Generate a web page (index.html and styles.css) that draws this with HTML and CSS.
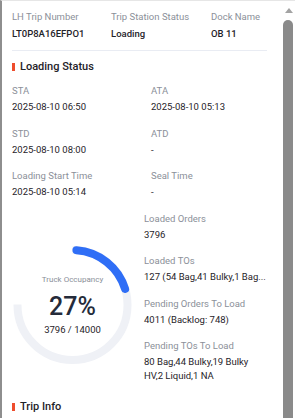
FILE: index.html
```html
<!DOCTYPE html>
<html>
<head>
<meta charset="utf-8">
<link rel="stylesheet" href="styles.css">
</head>
<body>
<div class="frame">
  <div class="content">
    <div class="header">
      <div class="field head">
        <div class="label">LH Trip Number</div>
        <div class="value strong">LT0P8A16EFPO1</div>
      </div>
      <div class="field head">
        <div class="label">Trip Station Status</div>
        <div class="value strong">Loading</div>
      </div>
      <div class="field head">
        <div class="label">Dock Name</div>
        <div class="value strong">OB 11</div>
      </div>
    </div>

    <div class="title first">Loading Status</div>
    <div class="grid">
      <div class="field"><div class="label">STA</div><div class="value">2025-08-10 06:50</div></div>
      <div class="field"><div class="label">ATA</div><div class="value">2025-08-10 05:13</div></div>
      <div class="field"><div class="label">STD</div><div class="value">2025-08-10 08:00</div></div>
      <div class="field"><div class="label">ATD</div><div class="value">-</div></div>
      <div class="field"><div class="label">Loading Start Time</div><div class="value">2025-08-10 05:14</div></div>
      <div class="field"><div class="label">Seal Time</div><div class="value">-</div></div>
    </div>

    <div class="occupancy">
      <div class="gauge">
        <svg width="132" height="132" viewBox="0 0 132 132">
          <circle cx="60.5" cy="66" r="55" fill="none" stroke="#eff1f6" stroke-width="8"
                  stroke-dasharray="259.2 345.6" transform="rotate(-90 60.5 66)"/>
          <circle cx="60.5" cy="66" r="55" fill="none" stroke="#2f6ef6" stroke-width="8"
                  stroke-linecap="round" stroke-dasharray="66 345.6" stroke-dashoffset="-4"
                  transform="rotate(-90 60.5 66)"/>
        </svg>
        <div class="gauge-text">
          <div class="g-label">Truck Occupancy</div>
          <div class="g-pct">27%</div>
          <div class="g-num">3796 / 14000</div>
        </div>
      </div>
      <div class="stats">
        <div class="field"><div class="label">Loaded Orders</div><div class="value">3796</div></div>
        <div class="field"><div class="label">Loaded TOs</div><div class="value nowrap">127 (54 Bag,41 Bulky,1 Bag...</div></div>
        <div class="field"><div class="label">Pending Orders To Load</div><div class="value">4011 (Backlog: 748)</div></div>
        <div class="field"><div class="label">Pending TOs To Load</div><div class="value">80 Bag,44 Bulky,19 Bulky HV,2 Liquid,1 NA</div></div>
      </div>
    </div>

    <div class="title second">Trip Info</div>
  </div>
  <div class="scrollbar">
    <div class="arrow"></div>
    <div class="thumb"></div>
  </div>
</div>
</body>
</html>
```

FILE: styles.css
```css
* { box-sizing: border-box; }
html, body {
  margin: 0;
  padding: 0;
  width: 295px;
  height: 418px;
  overflow: hidden;
  background: #ffffff;
  font-family: Roboto, "Liberation Sans", sans-serif;
}
.frame {
  display: flex;
  height: 418px;
  border-left: 2px solid #8e8e8e;
  border-top: 1px solid #e6e6e6;
}
.content {
  flex: 1;
  min-width: 0;
  padding: 9px 15px 0 10px;
}
.header {
  display: grid;
  grid-template-columns: 99px 100px 1fr;
  padding-bottom: 9px;
  border-bottom: 1px solid #e9ecf3;
}
.label {
  font-size: 9.5px;
  line-height: 14px;
  color: #8b9099;
  white-space: nowrap;
}
.value {
  font-size: 9.5px;
  line-height: 14px;
  color: #1f2329;
  margin-top: 2px;
}
.head .value { margin-top: 3px; }
.value.strong { font-weight: 500; }
.grid .field, .stats .field { margin-bottom: 12.5px; }
.nowrap { white-space: nowrap; }
.title {
  display: flex;
  align-items: center;
  gap: 5px;
  font-size: 11px;
  line-height: 16px;
  font-weight: 500;
  color: #1f2329;
}
.title::before {
  content: "";
  width: 3px;
  height: 8px;
  background: #ee4d2d;
}
.title.first { margin-top: 8px; }
.title.second { margin-top: 3px; }
.grid {
  display: grid;
  grid-template-columns: 139px 1fr;
  margin-top: 9px;
}
.occupancy {
  display: grid;
  grid-template-columns: 132px 1fr;
}
.gauge {
  position: relative;
  width: 132px;
  height: 132px;
  margin-top: 27.5px;
}
.gauge svg { display: block; }
.gauge-text {
  position: absolute;
  left: 0;
  top: 0;
  width: 121px;
  height: 132px;
  display: flex;
  flex-direction: column;
  align-items: center;
  justify-content: center;
  text-align: center;
}
.g-label {
  font-size: 8px;
  line-height: 10px;
  color: #8b9099;
  margin-bottom: 9px;
}
.g-pct {
  font-size: 25px;
  line-height: 26px;
  font-weight: 500;
  color: #252b3a;
}
.g-num {
  font-size: 9.5px;
  line-height: 12px;
  color: #1f2329;
  margin-top: 4px;
}
.stats { min-width: 0; }
.scrollbar {
  width: 13px;
  display: flex;
  flex-direction: column;
  align-items: flex-start;
  padding-left: 1px;
}
.arrow {
  width: 0;
  height: 0;
  margin: 7px 0 0 1.5px;
  border-left: 4px solid transparent;
  border-right: 4px solid transparent;
  border-bottom: 5px solid #a3a3a3;
}
.thumb {
  margin-top: 7px;
  width: 10px;
  flex: 1;
  background: #8a8a8a;
  border-radius: 5px 5px 0 0;
}
```
